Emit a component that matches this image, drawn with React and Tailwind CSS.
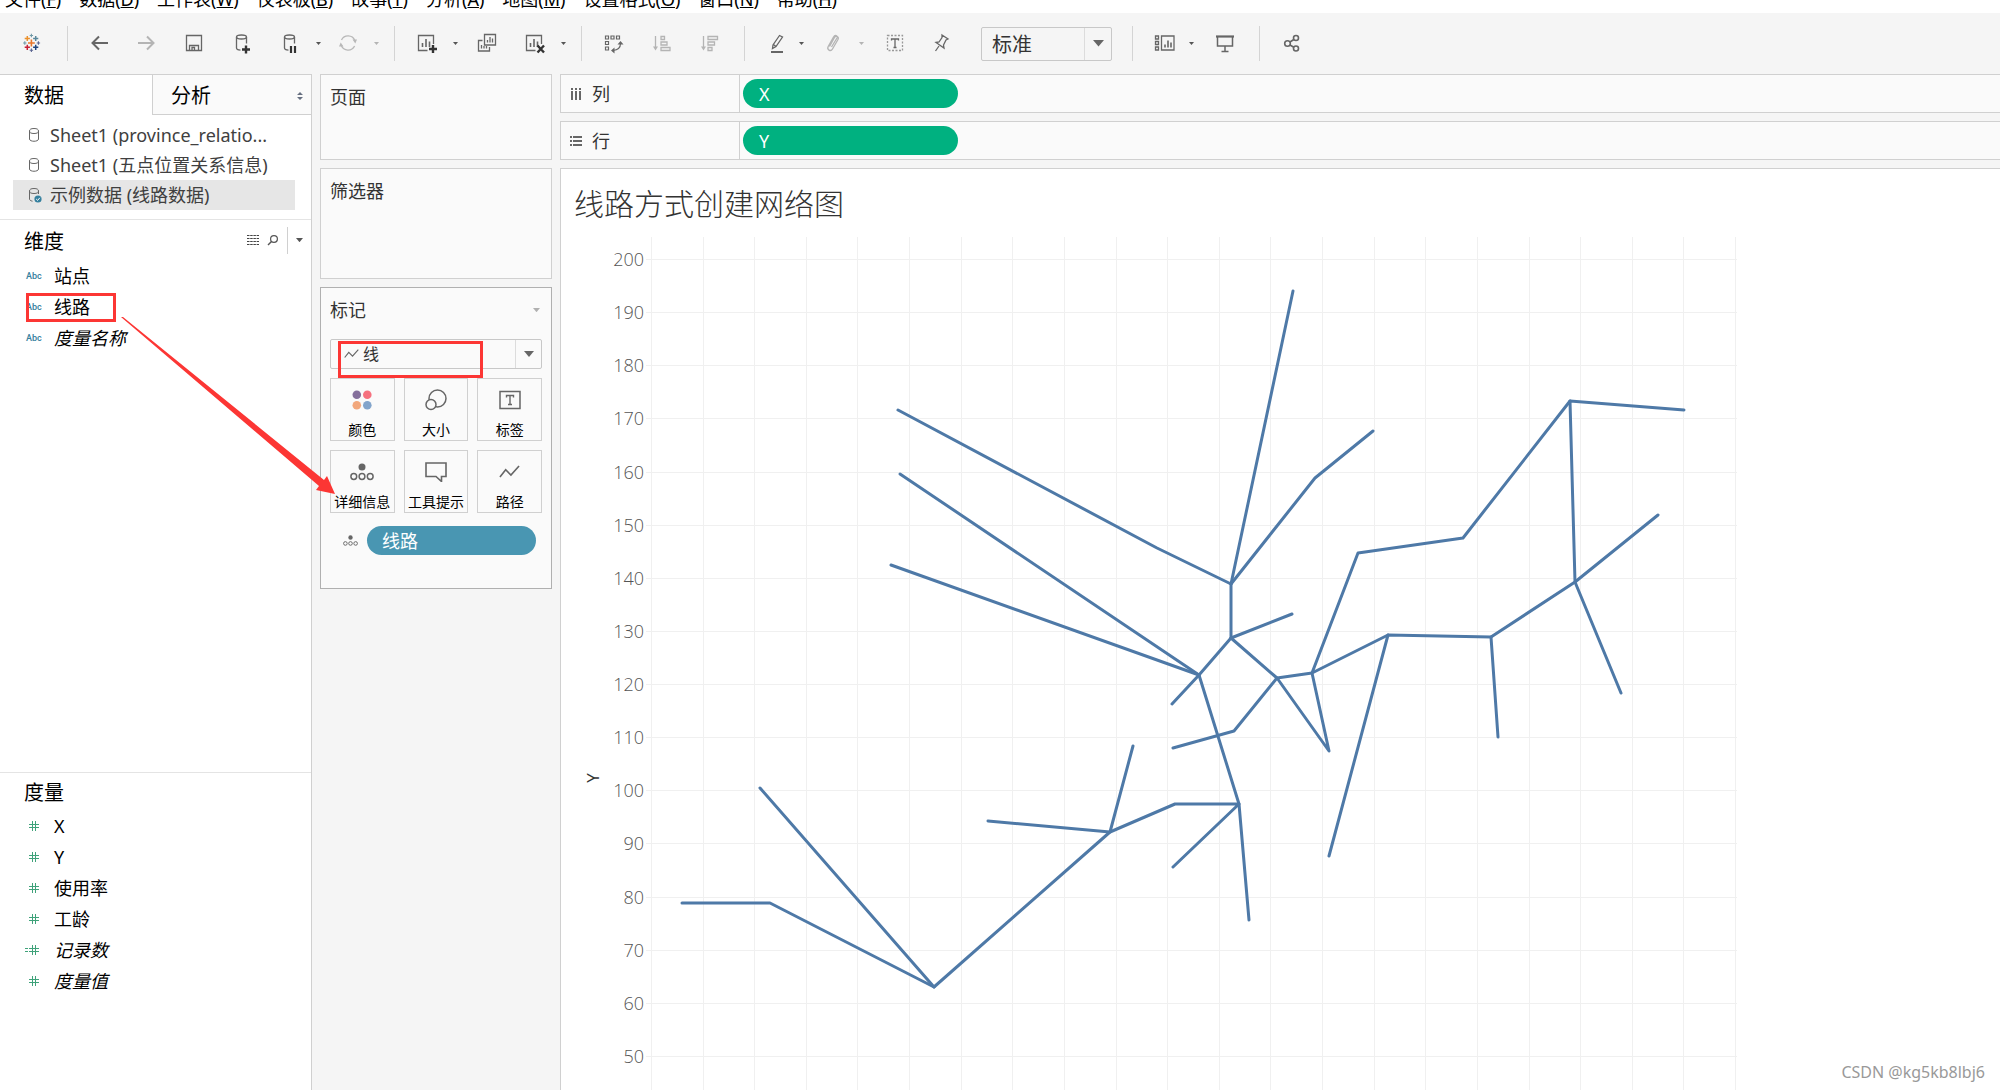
import React from "react";

const menus = [
  ["文件", "F"],
  ["数据", "D"],
  ["工作表", "W"],
  ["仪表板", "B"],
  ["故事", "T"],
  ["分析", "A"],
  ["地图", "M"],
  ["设置格式", "O"],
  ["窗口", "N"],
  ["帮助", "H"],
];

const dimensions = [
  { name: "站点" },
  { name: "线路" },
  { name: "度量名称", italic: true },
];

const measures = [
  { name: "X" },
  { name: "Y" },
  { name: "使用率" },
  { name: "工龄" },
  { name: "记录数", italic: true, calculated: true },
  { name: "度量值", italic: true },
];

// Every route of the network, one polyline each
const routes = [
  "1293,291 1231,584 1231,638",
  "1373,431 1315,478 1231,584",
  "898,410 1157,548 1231,584",
  "900,474 1199,675",
  "891,565 1199,675",
  "1292,614 1231,638 1199,675 1172,704",
  "1231,638 1277,678 1312,673 1388,635 1491,637 1575,582 1658,515",
  "1173,748 1234,731 1277,678 1329,751 1312,673 1358,553 1463,538 1570,401 1684,410",
  "1570,401 1575,582 1621,693",
  "1491,637 1498,737",
  "1388,635 1329,856",
  "1199,675 1239,804 1249,920",
  "1173,867 1239,804 1175,804 1110,832 934,987 770,903 682,903",
  "1133,746 1110,832 988,821",
  "760,788 934,987",
];

const yTicks = Array.from({ length: 16 }, (_, i) => ({
  value: 200 - i * 10,
  y: Math.round(259 + i * 53.13) + 0.5,
}));
const xLines = Array.from(
  { length: 22 },
  (_, i) => Math.round(651 + i * 51.62) + 0.5
);

/* ---------- Icons ---------- */

const Icon = ({ children, color = "#666666", width = 1.3 }) => (
  <svg
    viewBox="0 0 24 24"
    className="size-6"
    fill="none"
    stroke={color}
    strokeWidth={width}
    aria-hidden="true"
  >
    {children}
  </svg>
);

const Triangle = ({ className = "w-2 text-[#666666]" }) => (
  <svg viewBox="0 0 10 6" className={className} aria-hidden="true">
    <path d="M0 0h10L5 6z" fill="currentColor" />
  </svg>
);

const plus = (x, y, r, color, w = 1.4) => (
  <path
    key={`${x}-${y}`}
    d={`M${x - r} ${y}h${r * 2}M${x} ${y - r}v${r * 2}`}
    stroke={color}
    strokeWidth={w}
  />
);

const LogoIcon = () => (
  <Icon>
    {plus(12.4, 12, 3.4, "#e8762c", 1.6)}
    {plus(8.3, 7.5, 2.6, "#eb912c", 1.5)}
    {plus(16.7, 7.5, 2.6, "#59879b", 1.5)}
    {plus(8.3, 16.3, 2.6, "#c72035", 1.5)}
    {plus(16.7, 16.3, 2.6, "#1f447e", 1.5)}
    {plus(12.4, 4.5, 1.7, "#7199a6", 1.1)}
    {plus(12.4, 19.3, 1.7, "#5b6591", 1.1)}
    {plus(5.8, 12, 1.7, "#7199a6", 1.1)}
    {plus(19.4, 12, 1.7, "#5b6591", 1.1)}
  </Icon>
);

const BackIcon = () => (
  <Icon width={2}>
    <path d="M20 12H5M11 5.5 4.5 12l6.500 6.500" />
  </Icon>
);

const ForwardIcon = () => (
  <Icon width={2} color="#b4b4b4">
    <path d="M4 12h15M13 5.500 19.500 12 13 18.500" />
  </Icon>
);

const SaveIcon = () => (
  <Icon>
    <path d="M4.500 4.500h15v15h-15zM7.500 19.500v-5h9v5M10 19.500v-3h2.500v3" />
  </Icon>
);

const Cylinder = () => (
  <>
    <ellipse cx="11.500" cy="6" rx="5" ry="2" />
    <path d="M6.500 6v11c0 1 1.500 2 4 2.200M16.500 6v6.500" />
  </>
);

const AddDataIcon = () => (
  <Icon>
    <Cylinder />
    {plus(16, 18.5, 4, "#333333", 2.4)}
  </Icon>
);

const PauseDataIcon = () => (
  <Icon>
    <Cylinder />
    <path d="M13 15v7M17 15v7" stroke="#333333" strokeWidth="2.2" />
  </Icon>
);

const RefreshIcon = () => (
  <Icon color="#b8b8b8">
    <path d="M5.500 9A7.300 7.300 0 0 1 18.800 9.500M18.600 15A7.300 7.300 0 0 1 5.300 14.500" />
    <path d="M16.500 8.500h4.500L19.300 12.500zM7.500 15.500H3L4.700 11.500z" fill="#b8b8b8" stroke="none" />
  </Icon>
);

const sheet = (
  <>
    <path d="M18.500 13V4.500h-15v15h9" />
    <path d="M7.500 16v-4M11 16V8M14.500 16v-5.500" strokeWidth="1.600" />
  </>
);

const NewSheetIcon = () => (
  <Icon>
    {sheet}
    {plus(18, 18, 4, "#333333", 2.4)}
  </Icon>
);

const ClearSheetIcon = () => (
  <Icon>
    {sheet}
    <path d="M14.500 14.500l6.500 7M21 14.500l-6.500 7" stroke="#333333" strokeWidth="2.400" />
  </Icon>
);

const DuplicateIcon = () => (
  <Icon>
    <path d="M9.500 3.500h11v10.500h-11zM12.500 11.500V9M15 11.500V6M17.500 11.500V7.500" />
    <path d="M7.500 9.500h-4v10.500h11v-4M6.500 17.500v-3.500M9 17.500v-2.500M11.500 17.500v-2.500" />
  </Icon>
);

const SwapIcon = () => (
  <Icon width={1.2}>
    <path d="M3.500 5h3v3h-3zM9 5h3v3H9zM14.500 5h3v3h-3zM3.500 10.500h3v3h-3zM3.500 16h3v3h-3z" />
    <path d="M18.500 12.500c0 4-2.500 6.500-7.500 7" />
    <path d="M15.500 13.500 18.500 10l3 3.500zM12.500 16.500 9 19.500l3.500 3z" fill="#666666" stroke="none" />
  </Icon>
);

const SortAscIcon = () => (
  <Icon color="#b4b4b4">
    <path d="M5.500 5v12M11 5.500h3.500v3H11zM11 11h6v3h-6zM11 16.500h9v3h-9z" />
    <path d="M3 15.500h5L5.500 19.500z" fill="#b4b4b4" stroke="none" />
  </Icon>
);

const SortDescIcon = () => (
  <Icon color="#b4b4b4">
    <path d="M5.500 5v12M10 5.500h9.500v3H10zM10 11h6.500v3H10zM10 16.500h4v3h-4z" />
    <path d="M3 15.500h5L5.500 19.500z" fill="#b4b4b4" stroke="none" />
  </Icon>
);

const HighlightIcon = () => (
  <Icon>
    <path d="M14.500 4.500 8 14l-.500 3.500L11 15.500l6.500-9.500zM8.500 13.500l2.500 2" />
    <path d="M6 21h12" strokeWidth="2" />
  </Icon>
);

const ClipIcon = () => (
  <Icon color="#b4b4b4">
    <path d="M8.500 15.500l5-9c1.500-2.500 5-.500 3.500 2l-5.500 9.500c-1.800 3-6 .700-4.300-2.500l5.300-9.500c1.500-2.500 4.500-1.500 3.500 1L10.500 16" />
  </Icon>
);

const LabelBoxIcon = () => (
  <Icon>
    <path d="M4.500 4.500h15v15h-15z" strokeDasharray="2 1.500" stroke="#999999" />
    <path d="M8.500 9.500V8h7v1.500M12 8v8.500M10.500 16.500h3" />
  </Icon>
);

const PinIcon = () => (
  <Icon>
    <path d="M13 4l6 4-2 1-2.500 5 .500 3-8-5.500 3-.500L13 6.500zM10 15l-3.500 5" />
  </Icon>
);

const CardsIcon = () => (
  <Icon>
    <path d="M2.500 5h3v3h-3zM2.500 10.500h3v3h-3zM2.500 16h3v3h-3zM8.500 5h12.500v14H8.500z" />
    <path d="M12 16.500v-3M15 16.500v-7M18 16.500v-5" strokeWidth="1.600" />
  </Icon>
);

const PresentIcon = () => (
  <Icon width={1.5}>
    <path d="M4.500 6v9h15V6M12 15v5M8.500 20.500h7" />
    <path d="M3 5.500h18" strokeWidth="2.200" />
  </Icon>
);

const ShareIcon = () => (
  <Icon width={1.6}>
    <circle cx="7.500" cy="12.500" r="2.800" />
    <circle cx="16" cy="7" r="2.500" />
    <circle cx="16" cy="17.500" r="2.500" />
    <path d="M10 11l3.800-2.500M10 14l3.800 2.200" />
  </Icon>
);

const TrendIcon = ({ className = "w-6" }) => (
  <svg viewBox="0 0 22 14" className={className} fill="none" aria-hidden="true">
    <path d="M1 12.500 7 5l5.500 5.500L21 1" stroke="#666666" strokeWidth="1.700" />
  </svg>
);

const DetailIcon = ({ className = "w-6" }) => (
  <svg viewBox="0 0 24 18" className={className} fill="none" aria-hidden="true">
    <circle cx="12" cy="4" r="3.500" fill="#666666" />
    <g stroke="#666666" strokeWidth="1.500">
      <circle cx="3.800" cy="13.500" r="2.900" />
      <circle cx="12" cy="13.500" r="2.900" />
      <circle cx="20.200" cy="13.500" r="2.900" />
    </g>
  </svg>
);

const ColorIcon = () => (
  <svg viewBox="0 0 20 20" className="w-5" aria-hidden="true">
    <circle cx="4.800" cy="4.800" r="4.300" fill="#85709c" />
    <circle cx="15.300" cy="4.800" r="4.300" fill="#f6717f" />
    <circle cx="4.800" cy="15.300" r="4.300" fill="#f2a77c" />
    <circle cx="15.300" cy="15.300" r="4.300" fill="#82a4cb" />
  </svg>
);

const SizeIcon = () => (
  <svg viewBox="0 0 24 22" className="w-6" fill="none" stroke="#666666" strokeWidth="1.500" aria-hidden="true">
    <circle cx="13.500" cy="9.500" r="8.500" />
    <circle cx="7" cy="15.500" r="5" fill="#fafafa" />
  </svg>
);

const LabelIcon = () => (
  <svg viewBox="0 0 22 20" className="w-[22px]" fill="none" stroke="#666666" aria-hidden="true">
    <path d="M1 1.500h20v17H1z" strokeWidth="1.500" />
    <path d="M7.500 7.500V5.500h7v2M11 5.500v9M9 14.500h4" strokeWidth="1.400" />
  </svg>
);

const TooltipIcon = () => (
  <svg viewBox="0 0 22 20" className="w-[22px]" fill="none" aria-hidden="true">
    <path d="M1 1h20v13.500h-4.500V19.500L11 14.500H1z" stroke="#666666" strokeWidth="1.600" />
  </svg>
);

const DatabaseIcon = ({ checked }) => (
  <svg viewBox="0 0 14 16" className="w-3.5 shrink-0" fill="none" stroke="#666666" aria-hidden="true">
    <ellipse cx="6" cy="4" rx="4.500" ry="2.500" />
    {checked ? (
      <>
        <path d="M1.500 4v8c0 1 1 1.800 3 2.200M10.500 4v3" />
        <circle cx="10" cy="12" r="3.600" fill="#35809e" stroke="none" />
        <path d="M8.200 12l1.400 1.400 2.200-2.600" stroke="#ffffff" />
      </>
    ) : (
      <path d="M1.500 4v8c0 3 9 3 9 0V4" />
    )}
  </svg>
);

const HashIcon = ({ calculated }) => (
  <svg viewBox="0 0 16 10" className="w-4" fill="none" stroke="#3fa27a" aria-hidden="true">
    <path d="M5 3.500h10M5 6.500h10M8.500 0v10M11.500 0v10" />
    {calculated && <path d="M1 3.500h3M1 6.500h3" />}
  </svg>
);

/* ---------- Toolbar ---------- */

const ToolButton = ({ label, className = "", children }) => (
  <button type="button" aria-label={label} className={`shrink-0 cursor-pointer pb-0.5 ${className}`}>
    {children}
  </button>
);

const Caret = ({ className, muted }) => (
  <button
    type="button"
    aria-label="更多"
    className={`flex w-2 shrink-0 cursor-pointer justify-center ${className}`}
  >
    <Triangle className={muted ? "w-[5px] text-[#b4b4b4]" : "w-[5px] text-[#555555]"} />
  </button>
);

const Divider = ({ className }) => (
  <span className={`h-[35px] w-px shrink-0 bg-[#d4d4d4] ${className}`} />
);

const Toolbar = () => (
  <div className="flex h-[61px] shrink-0 items-center pl-[19px]">
    <ToolButton label="开始页面"><LogoIcon /></ToolButton>
    <Divider className="ml-6" />
    <ToolButton label="撤消" className="ml-5"><BackIcon /></ToolButton>
    <ToolButton label="重做" className="ml-5.5"><ForwardIcon /></ToolButton>
    <ToolButton label="保存" className="ml-6"><SaveIcon /></ToolButton>
    <ToolButton label="新建数据源" className="ml-6"><AddDataIcon /></ToolButton>
    <ToolButton label="暂停自动更新" className="ml-6"><PauseDataIcon /></ToolButton>
    <Caret className="ml-3" />
    <ToolButton label="运行更新" className="ml-3.5"><RefreshIcon /></ToolButton>
    <Caret className="ml-3" muted />
    <Divider className="ml-3.5" />
    <ToolButton label="新建工作表" className="ml-5"><NewSheetIcon /></ToolButton>
    <Caret className="ml-3" />
    <ToolButton label="复制工作表" className="ml-4"><DuplicateIcon /></ToolButton>
    <ToolButton label="清除工作表" className="ml-6"><ClearSheetIcon /></ToolButton>
    <Caret className="ml-3" />
    <Divider className="ml-3.5" />
    <ToolButton label="交换行和列" className="ml-5"><SwapIcon /></ToolButton>
    <ToolButton label="升序排序" className="ml-6"><SortAscIcon /></ToolButton>
    <ToolButton label="降序排序" className="ml-6"><SortDescIcon /></ToolButton>
    <Divider className="ml-5.5" />
    <ToolButton label="突出显示" className="ml-5"><HighlightIcon /></ToolButton>
    <Caret className="ml-2" />
    <ToolButton label="组成员" className="ml-4"><ClipIcon /></ToolButton>
    <Caret className="ml-3" muted />
    <ToolButton label="显示标记标签" className="ml-4.5"><LabelBoxIcon /></ToolButton>
    <ToolButton label="固定轴" className="ml-5.5"><PinIcon /></ToolButton>
    <div className="relative ml-7 w-[131px] shrink-0">
      <select
        aria-label="适合"
        className="block h-[34px] w-full appearance-none rounded-xs border border-[#c8c8c8] bg-transparent pt-0.5 pl-2.5 text-xl text-[#333333]"
      >
        <option>标准</option>
        <option>整个视图</option>
      </select>
      <span className="pointer-events-none absolute inset-y-px right-px flex w-[27px] items-center justify-center border-l border-[#dcdcdc]">
        <Triangle className="w-[11px] text-[#666666]" />
      </span>
    </div>
    <Divider className="ml-5" />
    <ToolButton label="显示/隐藏卡" className="ml-5"><CardsIcon /></ToolButton>
    <Caret className="ml-2.5" />
    <ToolButton label="演示模式" className="ml-4.5"><PresentIcon /></ToolButton>
    <Divider className="ml-5.5" />
    <ToolButton label="共享" className="ml-5"><ShareIcon /></ToolButton>
  </div>
);

/* ---------- Data pane ---------- */

const Source = ({ children, active }) => (
  <li>
    <button
      type="button"
      className={`flex h-[30px] w-full items-center gap-2 pl-[15px] text-left text-lg whitespace-nowrap text-[#404040] ${
        active ? "bg-[#e6e6e6]" : ""
      }`}
    >
      <DatabaseIcon checked={active} />
      {children}
    </button>
  </li>
);

const Field = ({ name, italic, icon }) => (
  <li className="flex h-[31px] items-center text-lg text-black">
    <span className="w-[30px] shrink-0">{icon}</span>
    <span className={italic ? "italic" : ""}>{name}</span>
  </li>
);

const DataPane = () => (
  <aside className="flex w-[312px] shrink-0 flex-col border-t border-r border-[#d0d0d0] bg-white">
    <div className="flex h-10 shrink-0 text-xl text-black">
      <button type="button" className="w-[152px] pt-0.5 pl-6 text-left">数据</button>
      <button
        type="button"
        className="flex grow items-center justify-between border-b border-l border-[#d0d0d0] bg-[#fafafa] pt-0.5 pr-2 pl-[18px]"
      >
        分析
        <svg viewBox="0 0 6 8" className="w-1.5 text-[#666f80]" aria-hidden="true">
          <path d="M3 0l3 3H0zM3 8L0 5h6z" fill="currentColor" />
        </svg>
      </button>
    </div>
    <ul className="mt-[5px] mr-4 ml-[13px]">
      <Source>Sheet1 (province_relatio...</Source>
      <Source>Sheet1 (五点位置关系信息)</Source>
      <Source active>示例数据 (线路数据)</Source>
    </ul>
    <section className="mt-[9px] h-[553px] border-t border-[#e4e4e4] pl-6">
      <div className="flex h-10 items-center">
        <h2 className="grow pt-1 text-xl text-black">维度</h2>
        <button type="button" aria-label="查看数据">
          <svg viewBox="0 0 12 10" className="w-3" aria-hidden="true">
            <path
              d="M0 .5h12M0 3.500h12M0 6.500h12M0 9.500h12"
              stroke="#444444"
              strokeWidth="1.200"
              strokeDasharray="2.500 .700"
            />
          </svg>
        </button>
        <button type="button" aria-label="查找字段" className="ml-2">
          <svg viewBox="0 0 12 12" className="w-3" fill="none" stroke="#555555" aria-hidden="true">
            <circle cx="7" cy="5" r="3.400" strokeWidth="1.200" />
            <path d="M4.500 7.500 1 11" strokeWidth="1.500" />
          </svg>
        </button>
        <span className="ml-2 h-[27px] w-px bg-[#d0d0d0]" />
        <button type="button" aria-label="维度菜单" className="mr-2 ml-2">
          <Triangle className="w-[7px] text-[#555555]" />
        </button>
      </div>
      <ul>
        {dimensions.map((f) => (
          <Field
            key={f.name}
            {...f}
            icon={
              <span className="block pl-0.5 font-[Roboto] text-[9px] font-medium text-[#35809e]">
                Abc
              </span>
            }
          />
        ))}
      </ul>
    </section>
    <section className="grow border-t border-[#e4e4e4] pl-6">
      <h2 className="flex h-[37px] items-center pt-0.5 text-xl text-black">度量</h2>
      <ul>
        {measures.map((f) => (
          <Field key={f.name} {...f} icon={<HashIcon calculated={f.calculated} />} />
        ))}
      </ul>
    </section>
  </aside>
);

/* ---------- Cards column ---------- */

const MarkButton = ({ label, children }) => (
  <button
    type="button"
    className="flex h-[63px] cursor-pointer flex-col items-center border border-[#d0d0d0] text-sm whitespace-nowrap text-black"
  >
    <span className="flex h-[41px] items-center">{children}</span>
    {label}
  </button>
);

const Cards = () => (
  <div className="flex w-[232px] shrink-0 flex-col gap-2 text-lg text-[#333333]">
    <section className="h-[86px] border border-[#d0d0d0] bg-[#fafafa] px-[9px] py-2">
      <h2>页面</h2>
    </section>
    <section className="h-[111px] border border-[#d0d0d0] bg-[#fafafa] px-[9px] py-2">
      <h2>筛选器</h2>
    </section>
    <section className="h-[302px] border border-[#b0b0b0] bg-[#fafafa] px-[9px] py-2">
      <div className="flex items-center justify-between">
        <h2>标记</h2>
        <Triangle className="mr-0.5 w-[7px] text-[#b0b0b0]" />
      </div>
      <div className="relative mt-[15px]">
        <select
          aria-label="标记类型"
          className="block h-[30px] w-full appearance-none rounded-xs border border-[#c8c8c8] bg-transparent pl-8 text-base text-[#333333]"
        >
          <option>线</option>
          <option>条形图</option>
        </select>
        <span className="pointer-events-none absolute inset-y-0 left-3.5 flex items-center">
          <TrendIcon className="w-[15px]" />
        </span>
        <span className="pointer-events-none absolute inset-y-px right-px flex w-[26px] items-center justify-center border-l border-[#dcdcdc]">
          <Triangle className="w-2.5 text-[#666666]" />
        </span>
      </div>
      <div className="mt-[9px] grid grid-cols-3 gap-[9px]">
        <MarkButton label="颜色"><ColorIcon /></MarkButton>
        <MarkButton label="大小"><SizeIcon /></MarkButton>
        <MarkButton label="标签"><LabelIcon /></MarkButton>
        <MarkButton label="详细信息"><DetailIcon /></MarkButton>
        <MarkButton label="工具提示"><TooltipIcon /></MarkButton>
        <MarkButton label="路径"><TrendIcon className="w-[21px]" /></MarkButton>
      </div>
      <div className="mt-[13px] flex items-center pl-[13px]">
        <DetailIcon className="w-[15px]" />
        <button
          type="button"
          className="mr-[6px] ml-[9px] flex h-[29px] grow items-center rounded-full bg-[#4996b2] pl-[15px] text-white"
        >
          线路
        </button>
      </div>
    </section>
  </div>
);

/* ---------- Shelves and view ---------- */

const Shelf = ({ title, icon, pill }) => (
  <div className="flex h-[39px] shrink-0 border border-r-0 border-[#d0d0d0] bg-[#fafafa] text-lg text-[#333333]">
    <div className="flex w-[179px] shrink-0 items-center gap-2.5 border-r border-[#d0d0d0] pl-[9px]">
      {icon}
      {title}
    </div>
    <button
      type="button"
      className="mt-1 ml-[3px] flex h-[29px] w-[215px] items-center rounded-full bg-[#00b180] pl-4 text-white"
    >
      {pill}
    </button>
  </div>
);

const NetworkChart = () => (
  <svg
    viewBox="561 237 1200 853"
    className="h-[853px] w-[1200px] shrink-0 font-['Open_Sans']"
    fill="none"
    role="img"
    aria-label="线路方式创建网络图"
  >
    <g stroke="#f0f0f0">
      {xLines.map((x) => (
        <path key={x} d={`M${x} 237V1090`} />
      ))}
      {yTicks.map(({ value, y }) => (
        <path key={value} d={`M646 ${y}H1737`} />
      ))}
    </g>
    <g fill="#555555" fontSize="18" fontWeight="300" textAnchor="end">
      {yTicks.map(({ value, y }) => (
        <text key={value} x="644" y={y + 6}>
          {value}
        </text>
      ))}
    </g>
    <text
      fill="#333333"
      fontSize="17"
      textAnchor="middle"
      transform="translate(599 778) rotate(-90)"
    >
      Y
    </text>
    <g stroke="#4e79a7" strokeWidth="3" strokeLinecap="round" strokeLinejoin="round">
      {routes.map((points) => (
        <polyline key={points} points={points} />
      ))}
    </g>
  </svg>
);

const Worksheet = () => (
  <main className="flex min-w-0 grow flex-col gap-2">
    <Shelf
      title="列"
      pill="X"
      icon={
        <svg viewBox="0 0 12 12" className="w-3" aria-hidden="true">
          <path
            d="M2 0v2M6 0v2M10 0v2M2 3v9M6 3v9M10 3v9"
            stroke="#666666"
            strokeWidth="2"
          />
        </svg>
      }
    />
    <Shelf
      title="行"
      pill="Y"
      icon={
        <svg viewBox="0 0 12 12" className="w-3" aria-hidden="true">
          <path
            d="M0 2h2M0 6h2M0 10h2M3 2h9M3 6h9M3 10h9"
            stroke="#666666"
            strokeWidth="2"
          />
        </svg>
      }
    />
    <div className="flex min-h-0 grow flex-col overflow-hidden border-t border-l border-[#d0d0d0] bg-white">
      <h1 className="flex h-[68px] shrink-0 items-center pt-0.5 pl-[13px] text-3xl font-light text-[#333333]">
        线路方式创建网络图
      </h1>
      <NetworkChart />
    </div>
  </main>
);

// Red marks that show where the field is dragged
const DragHint = () => (
  <div className="pointer-events-none absolute inset-0">
    <div className="absolute top-[293px] left-[26px] h-[29px] w-[90px] border-3 border-[#fc3634]" />
    <div className="absolute top-[341px] left-[338px] h-[37px] w-[145px] border-3 border-[#fc3634]" />
    <svg viewBox="0 0 340 500" className="absolute top-0 left-0 w-[340px]" aria-hidden="true">
      <path d="M121 317 123 317 324 480 327 476 335 494 316 490 319 486z" fill="#fc3634" />
    </svg>
  </div>
);

export default function App() {
  return (
    <div className="relative flex h-screen flex-col overflow-hidden bg-[#f5f5f5] font-['Noto_Sans','Noto_Sans_CJK_SC',sans-serif]">
      <nav className="flex h-[13px] shrink-0 items-end gap-[18px] overflow-hidden bg-white pl-[5px] text-lg leading-7 whitespace-nowrap text-black">
        {menus.map(([name, key]) => (
          <button key={key} type="button" className="shrink-0">
            {name}(<u className="underline-offset-1">{key}</u>)
          </button>
        ))}
      </nav>
      <Toolbar />
      <div className="flex min-h-0 grow gap-2">
        <DataPane />
        <Cards />
        <Worksheet />
      </div>
      <DragHint />
      <p className="absolute right-[15px] bottom-1.5 text-base text-[#999999]">
        CSDN @kg5kb8lbj6
      </p>
    </div>
  );
}
